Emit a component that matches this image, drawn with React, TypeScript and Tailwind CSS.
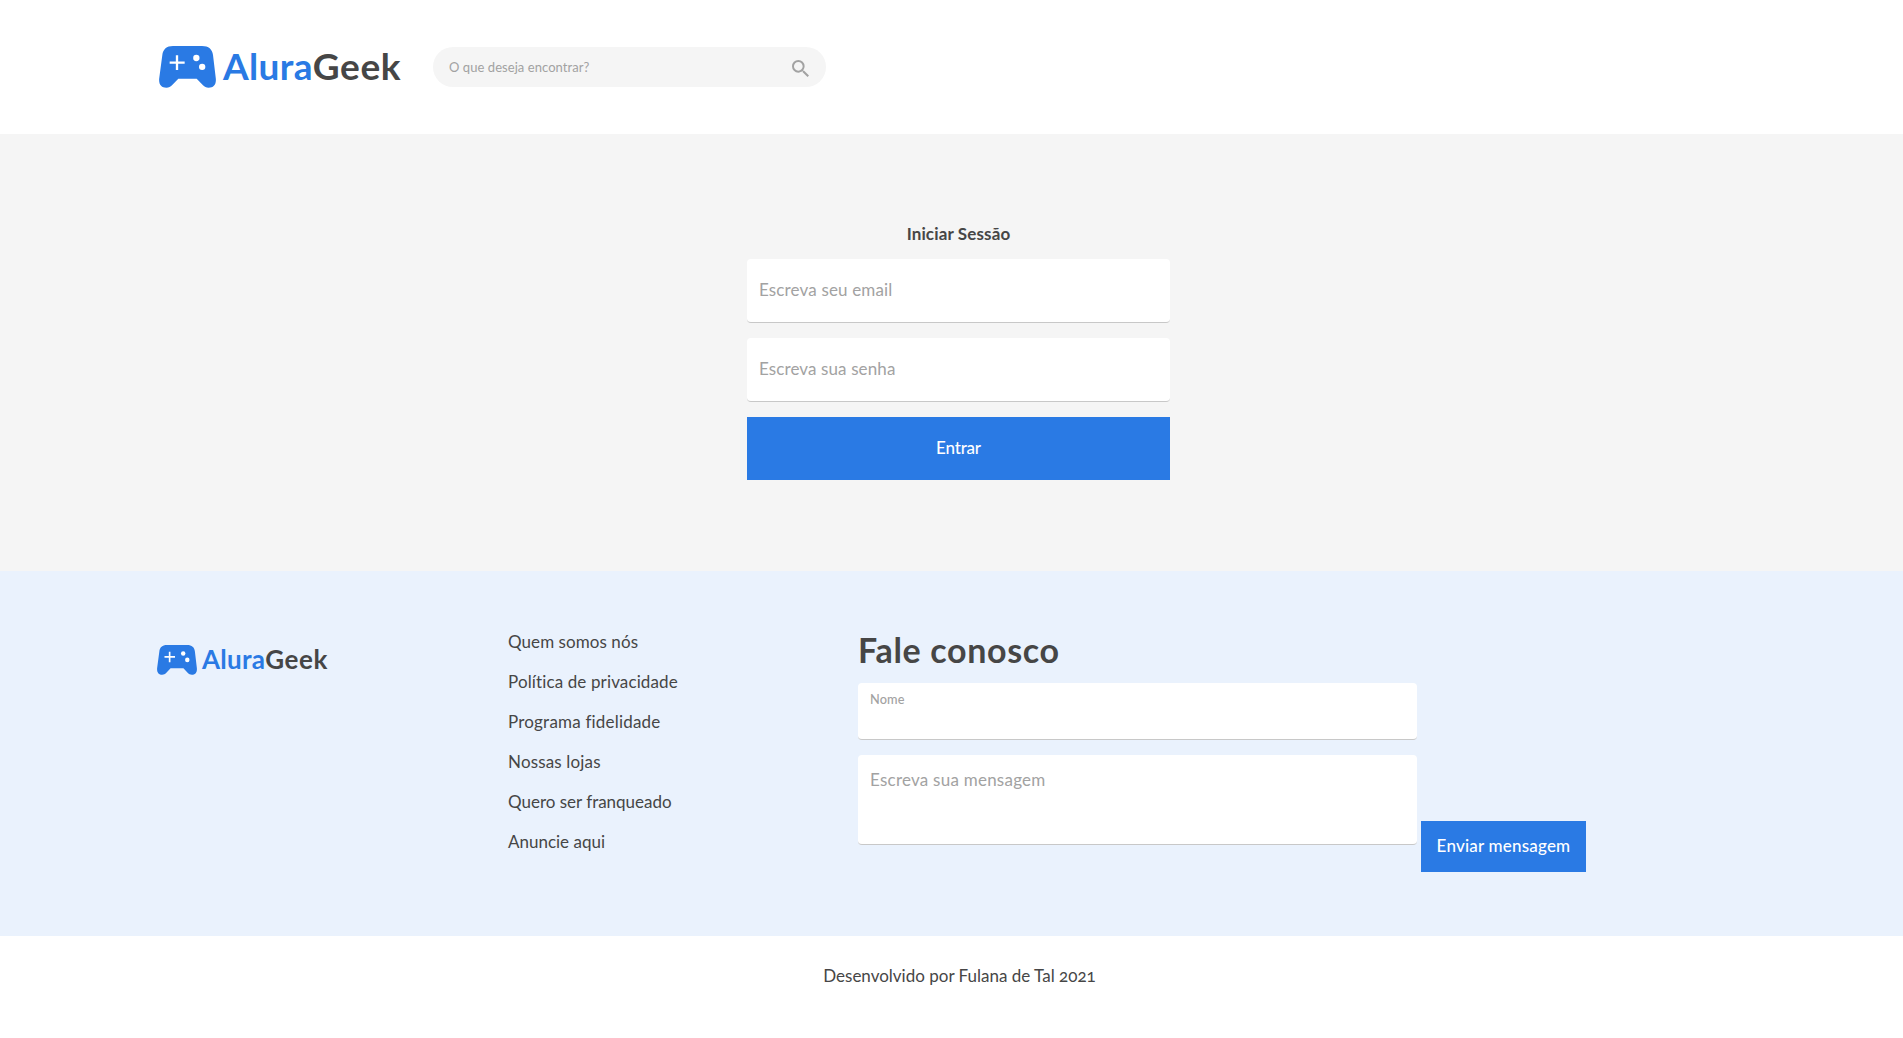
function Controller({ className }: { className: string }) {
  return (
    <svg viewBox="0 0 171 126" preserveAspectRatio="none" className={className}>
      <path
        fill="#2a7ae4"
        d="M42 0H129C149 0 160 10 162 27L170.500 98C172 116 163 125 149 125C141 125 137 123 132 118L113 98H58L39 118C34 123 30 125 22 125C8 125-1 116 .5 98L10 27C12 10 23 0 42 0Z"
      />
      <path fill="#fff" d="M50.500 28h7v18.500H77v7H57.500V72h-7V53.500H32v-7h18.500z" />
      <circle cx="112" cy="36" r="9.500" fill="#fff" />
      <circle cx="129.500" cy="62.500" r="9.500" fill="#fff" />
    </svg>
  );
}

const links = [
  { label: "Quem somos nós", spacing: "tracking-[0.07px]" },
  { label: "Política de privacidade", spacing: "tracking-[0.127px]" },
  { label: "Programa fidelidade", spacing: "tracking-[0.2px]" },
  { label: "Nossas lojas", spacing: "tracking-[0.16px]" },
  { label: "Quero ser franqueado", spacing: "tracking-[-0.01px]" },
  { label: "Anuncie aqui", spacing: "tracking-[0px]" },
];

const field =
  "block rounded-[4px] border-b border-[#c8c8c8] bg-white px-3 outline-none placeholder:text-[#a2a2a2] placeholder:opacity-100";

export default function App() {
  return (
    <div className="flex h-[1038px] w-full flex-col overflow-hidden bg-white font-['Lato',sans-serif] text-[17px] text-[#464646]">
      <header className="flex h-[134px] shrink-0 items-center pl-[159px]">
        <a href="#" className="flex h-[42px] w-[242px] items-center">
          <Controller className="h-[42px] w-[57px] shrink-0" />
          <span className="ml-[7px] whitespace-nowrap pb-[3px] text-[37px] font-bold leading-[42px]">
            <span className="tracking-[0.35px] text-[#2a7ae4]">Alura</span>
            <span className="tracking-[0.6px]">Geek</span>
          </span>
        </a>
        <div className="ml-8 flex h-10 w-[393px] items-center rounded-full bg-[#f5f5f5] pl-4 pr-4">
          <input
            type="text"
            placeholder="O que deseja encontrar?"
            className="h-full min-w-0 flex-1 bg-transparent text-[13px] tracking-[0.06px] outline-none placeholder:text-[#a2a2a2] placeholder:opacity-100"
          />
          <svg viewBox="3 3 17.500 17.500" className="mr-[1px] mt-[2px] h-[17px] w-[17px]" fill="#a2a2a2">
            <path d="M15.500 14h-.79l-.28-.27A6.471 6.471 0 0 0 16 9.500 6.500 6.500 0 1 0 9.500 16c1.610 0 3.090-.59 4.230-1.570l.27.28v.79l5 4.990L20.490 19l-4.990-5zm-6 0C7.010 14 5 11.990 5 9.500S7.010 5 9.500 5 14 7.010 14 9.500 11.990 14 9.500 14z" />
          </svg>
        </div>
      </header>

      <main className="flex h-[437px] shrink-0 justify-center bg-[#f5f5f5] pl-[14px] pt-[90px]">
        <form className="flex w-[423px] flex-col">
          <h2 className="mb-[15px] text-center font-bold leading-5 tracking-[0.14px]">Iniciar Sessão</h2>
          <input type="email" placeholder="Escreva seu email" className={`${field} mb-[15px] h-16 pb-[2px] tracking-[0.15px]`} />
          <input type="password" placeholder="Escreva sua senha" className={`${field} mb-[15px] h-16 pb-[2px] tracking-[0.11px]`} />
          <button type="button" className="h-[63px] bg-[#2a7ae4] pb-[2px] font-medium tracking-[-0.2px] text-white">
            Entrar
          </button>
        </form>
      </main>

      <section className="flex h-[365px] shrink-0 bg-[#eaf2fd] pl-[157px]">
        <a href="#" className="mt-[74px] flex h-[30px] w-[351px] items-center">
          <Controller className="h-[30px] w-10 shrink-0" />
          <span className="ml-[5px] whitespace-nowrap pb-[2px] text-[26px] font-bold leading-[30px]">
            <span className="tracking-[0.25px] text-[#2a7ae4]">Alura</span>
            <span className="tracking-[0.6px]">Geek</span>
          </span>
        </a>
        <ul className="mt-[59px] flex w-[350px] flex-col gap-4">
          {links.map((link) => (
            <li key={link.label} className={`h-6 leading-6 ${link.spacing}`}>
              <a href="#">{link.label}</a>
            </li>
          ))}
        </ul>
        <form className="pt-[59px]">
          <h2 className="mb-[13px] h-10 text-[34px] font-bold leading-10 tracking-[0.65px]">Fale conosco</h2>
          <label className="mb-[15px] block h-[57px] w-[559px] rounded-[4px] border-b border-[#c8c8c8] bg-white px-3 pt-2">
            <span className="block text-[12.75px] font-medium leading-4 tracking-[0.13px] text-[#a2a2a2]">Nome</span>
            <input type="text" className="block h-6 w-full outline-none" />
          </label>
          <div className="flex">
            <textarea
              placeholder="Escreva sua mensagem"
              className={`${field} h-[90px] w-[559px] resize-none pt-[13px] leading-6 tracking-[0.24px]`}
            />
            <button
              type="button"
              className="ml-1 mt-[66px] h-[51px] w-[165px] whitespace-nowrap bg-[#2a7ae4] pb-[2px] font-medium tracking-[0.2px] text-white"
            >
              Enviar mensagem
            </button>
          </div>
        </form>
      </section>

      <footer className="flex justify-center pl-4 pt-7">
        <p className="leading-6 [font-variant-numeric:oldstyle-nums]">Desenvolvido por Fulana de Tal 2021</p>
      </footer>
    </div>
  );
}
